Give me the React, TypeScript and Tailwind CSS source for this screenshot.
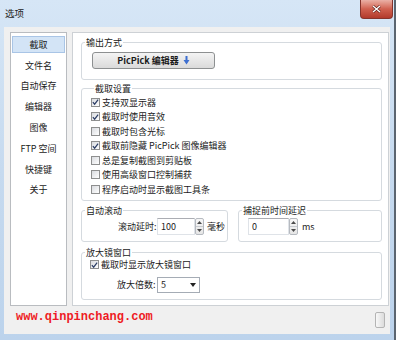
const Check = ({ on }: { on?: boolean }) => (
  <span className="w-[9px] h-[9px] shrink-0 border border-[#8e8f8f] bg-linear-to-br from-[#d9dbdf] to-white flex items-center justify-center">
    {on && (
      <svg width="8" height="8" viewBox="0 0 8 8">
        <path d="M1 4.2 L3 6.5 L7 1.2" fill="none" stroke="#2c3e66" strokeWidth="1.4" />
      </svg>
    )}
  </span>
);

const Spin = () => (
  <div className="w-[9px] h-[17px] flex flex-col border border-[#b6bac0] rounded-[2px] bg-linear-to-b from-[#f7f7f7] to-[#e6e6e6]">
    <div className="flex-1 flex items-center justify-center border-b border-[#c8cbd0]">
      <svg width="5" height="3" viewBox="0 0 5 3">
        <path d="M0 3 L2.5 0 L5 3 Z" fill="#4a4a4a" />
      </svg>
    </div>
    <div className="flex-1 flex items-center justify-center">
      <svg width="5" height="3" viewBox="0 0 5 3">
        <path d="M0 0 L2.5 3 L5 0 Z" fill="#4a4a4a" />
      </svg>
    </div>
  </div>
);

const Group = ({ title, className, children }: { title: string; className?: string; children: React.ReactNode }) => (
  <fieldset className={`border border-[#d5dadf] rounded-[3px] ${className ?? ""}`}>
    <legend className="ml-[3px] px-[1px] text-[9px] leading-[13px]">{title}</legend>
    {children}
  </fieldset>
);

const menu = ["截取", "文件名", "自动保存", "编辑器", "图像", "FTP 空间", "快捷键", "关于"];

const options: [string, boolean][] = [
  ["支持双显示器", true],
  ["截取时使用音效", true],
  ["截取时包含光标", false],
  ["截取前隐藏 PicPick 图像编辑器", true],
  ["总是复制截图到剪贴板", false],
  ["使用高级窗口控制捕获", false],
  ["程序启动时显示截图工具条", false],
];

export default function App() {
  return (
    <div className="w-[400px] h-[340px] bg-white text-[#1b1b1b] text-[9px] font-['Noto_Sans_CJK_SC',sans-serif]">
      <div className="w-[396px] h-[340px] flex flex-col bg-linear-to-b from-[#d6e6f6] via-[#c6daef] to-[#bcd3ec] border-r-2 border-[#5b6570]">
        {/* title bar */}
        <div className="h-[27px] shrink-0 flex items-start justify-between">
          <span className="pl-[5px] pt-[7px] text-[9.5px] leading-[13px] text-[#222]">选项</span>
          <div className="w-[33px] h-[19px] mr-[1px] rounded-b-[4px] border border-t-0 border-[#86342c] bg-linear-to-b from-[#eab0a6] via-[#d0604f] to-[#b23a2c] flex items-center justify-center">
            <svg width="9" height="8" viewBox="0 0 9 8">
              <path d="M1 1 L8 7 M8 1 L1 7" stroke="#5a1c16" strokeWidth="2.6" />
              <path d="M1 1 L8 7 M8 1 L1 7" stroke="#fff" strokeWidth="1.4" />
            </svg>
          </div>
        </div>

        {/* body */}
        <div className="flex-1 mx-[4px] mb-[6px] bg-[#f0f0f0] flex flex-col">
          <div className="flex gap-[5px] pl-[6px] pr-[1px] pt-[5px]">
            {/* sidebar */}
            <div className="w-[57px] h-[274px] shrink-0 bg-white border border-[#b9bcc0] px-[1px] pt-[1px]">
              {menu.map((m, i) => (
                <div key={m} className="h-[20.8px] flex items-center">
                  <div
                    className={`w-full h-[17px] flex items-center justify-center leading-[13px] ${
                      i === 0 ? "bg-[#d3e4f6] border border-[#a9c5e6]" : ""
                    }`}
                  >
                    {m}
                  </div>
                </div>
              ))}
            </div>

            {/* settings page */}
            <div className="flex-1 h-[274px] bg-white border border-[#cdd1d5] pl-[8px] pr-[6px] pt-[3px] flex flex-col">
              <Group title="输出方式" className="pb-[10px]">
                <div className="mt-[3px] ml-[10px] w-[123px] h-[17px] rounded-[3px] border border-[#8d9091] bg-linear-to-b from-[#f4f4f4] to-[#dadada] flex items-center justify-center gap-[4px]">
                  <span className="font-bold leading-[13px]">PicPick 编辑器</span>
                  <svg width="7" height="9" viewBox="0 0 7 9">
                    <path d="M2.5 0 H4.5 V4 H6.5 L3.5 8.5 L0.5 4 H2.5 Z" fill="#3d6fd0" />
                  </svg>
                </div>
              </Group>

              <Group title="截取设置" className="mt-[2px] pb-[3px] pl-[9px]">
                {options.map(([t, on]) => (
                  <div key={t} className="h-[14.5px] flex items-center gap-[2px]">
                    <Check on={on} />
                    <span className="leading-[13px]">{t}</span>
                  </div>
                ))}
              </Group>

              <div className="mt-[3px] flex gap-[10px]">
                <Group title="自动滚动" className="w-[147px] shrink-0 pb-[6px]">
                  <div className="mt-[1px] pl-[36px] flex items-center">
                    <span className="leading-[13px] w-[39px]">滚动延时:</span>
                    <div className="w-[38px] h-[17px] bg-white border border-[#dfe3e8] border-t-[#abadb3] flex items-center pl-[3px] leading-[13px]">100</div>
                    <Spin />
                    <span className="ml-[3px] leading-[13px]">毫秒</span>
                  </div>
                </Group>
                <Group title="捕捉前时间延迟" className="flex-1 pb-[6px]">
                  <div className="mt-[1px] pl-[9px] flex items-center">
                    <div className="w-[41px] h-[17px] bg-white border border-[#dfe3e8] border-t-[#abadb3] flex items-center pl-[3px] leading-[13px]">0</div>
                    <Spin />
                    <span className="ml-[4px] leading-[13px]">ms</span>
                  </div>
                </Group>
              </div>

              <Group title="放大镜窗口" className="mt-[4px] pb-[6px]">
                <div className="h-[12px] pl-[8px] flex items-center gap-[2px]">
                  <Check on />
                  <span className="leading-[13px]">截取时显示放大镜窗口</span>
                </div>
                <div className="mt-[6px] pl-[35px] flex items-center">
                  <span className="leading-[13px] w-[40px]">放大倍数:</span>
                  <div className="w-[43px] h-[16px] bg-white border border-[#a5acb5] flex items-center justify-between pl-[3px] pr-[3px] leading-[13px]">
                    <span>5</span>
                    <svg width="6" height="4" viewBox="0 0 6 4">
                      <path d="M0 0 L6 0 L3 4 Z" fill="#222" />
                    </svg>
                  </div>
                </div>
              </Group>
            </div>
          </div>

          <div className="flex-1 flex items-start justify-between pl-[12px] pr-[5px] pt-[4px]">
            <span className="font-['Liberation_Mono',monospace] font-bold text-[12px] leading-[14px] text-[#ee1b24]">
              www.qinpinchang.com
            </span>
            <div className="mt-[2px] w-[10px] h-[16px] rounded-[2px] border border-[#b4b4b4] bg-linear-to-r from-[#f8f8f8] to-[#dcdcdc]" />
          </div>
        </div>
      </div>
    </div>
  );
}
